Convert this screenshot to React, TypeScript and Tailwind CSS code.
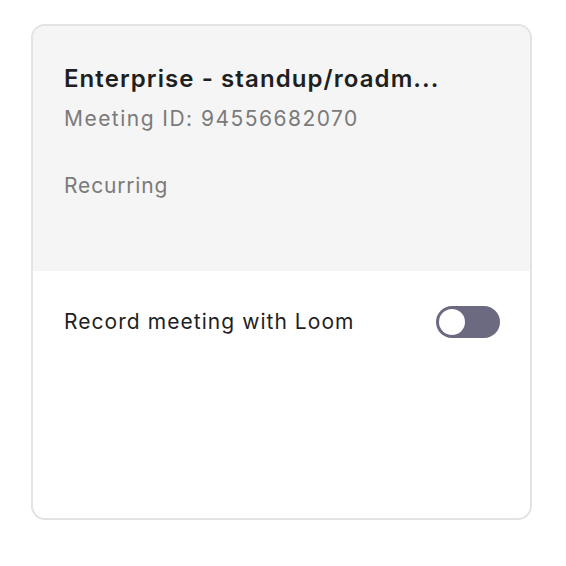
export default function App() {
  return (
    <div
      className="w-[566px] h-[566px] bg-white pt-[24px] pl-[31px]"
      style={{ fontFamily: 'Inter, "Noto Sans", sans-serif' }}
    >
      <div className="w-[501px] h-[496px] rounded-[14px] border-2 border-[#e3e3e3] overflow-hidden flex flex-col">
        <div className="bg-[#f5f5f5] h-[245px] pl-[31px] pr-[30px] pt-[37px]">
          <h2 className="text-[24px] leading-[32px] font-semibold tracking-[0.045em] text-[#1f1f1f] whitespace-nowrap">
            Enterprise - standup/roadm...
          </h2>
          <p className="mt-[10px] text-[21px] leading-[28px] tracking-[0.07em] text-[#7a7a7a]">
            Meeting ID: 94556682070
          </p>
          <p className="mt-[39px] text-[21px] leading-[28px] tracking-[0.04em] text-[#7a7a7a]">Recurring</p>
        </div>
        <div className="flex items-center justify-between pl-[31px] pr-[30px] pt-[35px]">
          <span className="text-[21px] leading-[32px] tracking-[0.05em] text-[#1f1f1f]">
            Record meeting with Loom
          </span>
          <button className="w-[64px] h-[32px] rounded-full bg-[#6b6a80] flex items-center px-[3px]">
            <span className="w-[26px] h-[26px] rounded-full bg-white block" />
          </button>
        </div>
      </div>
    </div>
  );
}
